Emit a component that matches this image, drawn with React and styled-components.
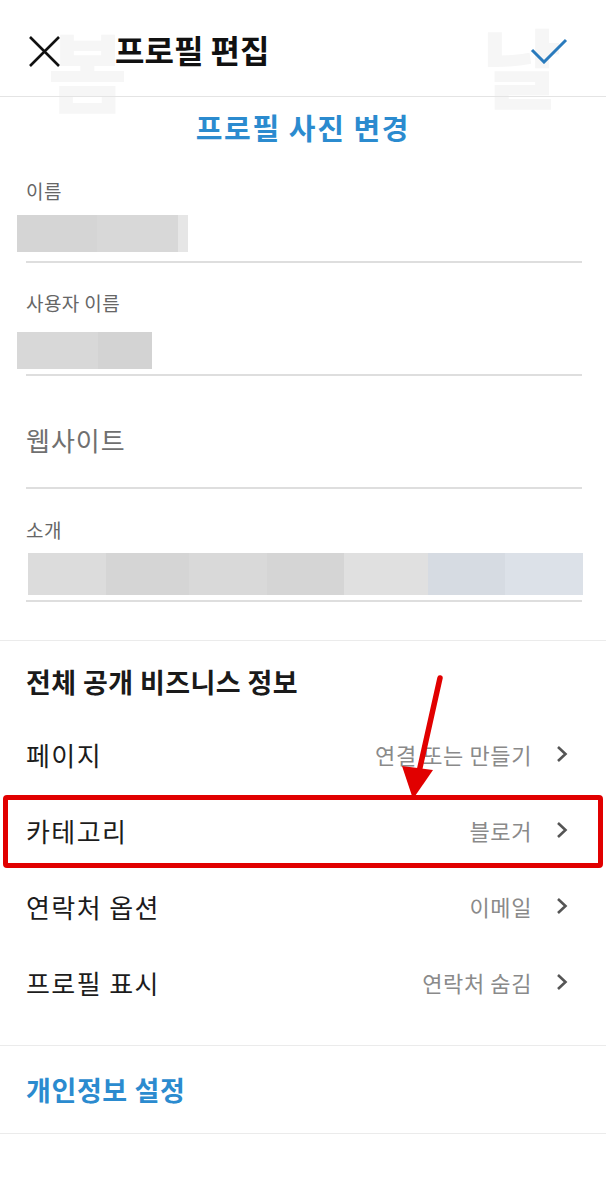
import React from "react";
import styled, { createGlobalStyle } from "styled-components";

const GlobalStyle = createGlobalStyle`
  html, body {
    margin: 0;
    padding: 0;
    background: #ffffff;
  }
  body {
    font-family: "Noto Sans CJK KR", "Noto Sans", sans-serif;
    color: #111111;
  }
`;

const Screen = styled.div`
  position: relative;
  width: 606px;
  height: 1178px;
  overflow: hidden;
  background: #ffffff;
`;

const Watermark = styled.span`
  position: absolute;
  top: ${(p) => p.top}px;
  left: ${(p) => p.left}px;
  font-size: 86px;
  font-weight: 900;
  line-height: 1;
  color: #f6f6f6;
  pointer-events: none;
`;

const Header = styled.header`
  position: relative;
  display: flex;
  align-items: center;
  height: 97px;
  padding: 6px 38px 0 28px;
  border-bottom: 1px solid #e4e4e4;
  box-sizing: border-box;
`;

const Title = styled.h1`
  margin: -4px 0 0 54px;
  font-size: 32px;
  font-weight: 700;
  color: #111111;
`;

const Spacer = styled.div`
  flex: 1;
`;

const ChangePhoto = styled.div`
  position: relative;
  height: 60px;
  display: flex;
  align-items: center;
  justify-content: center;
  font-size: 29px;
  font-weight: 700;
  letter-spacing: 1.6px;
  color: #2b8bcf;
`;

const Form = styled.div`
  position: relative;
  padding: 0 24px 38px 26px;
  border-bottom: 1px solid #ebebeb;
`;

const Field = styled.div`
  display: flex;
  flex-direction: column;
  padding-top: ${(p) => p.top}px;
  border-bottom: 2px solid #dedede;
`;

const Label = styled.div`
  font-size: 19px;
  line-height: 24px;
  letter-spacing: 0.4px;
  color: #666666;
`;

const Placeholder = styled.div`
  font-size: 26px;
  line-height: 32px;
  letter-spacing: 1px;
  color: #707070;
  padding-bottom: 31px;
`;

const Blur = styled.div`
  margin: ${(p) => p.mt}px 0 ${(p) => p.mb}px ${(p) => p.ml}px;
  width: ${(p) => p.w}px;
  height: ${(p) => p.h}px;
  background: ${(p) => p.bg};
`;

const Section = styled.section`
  position: relative;
  padding: ${(p) => p.pt}px 0 ${(p) => p.pb}px;
  border-bottom: 1px solid #ebebeb;
`;

const SectionTitle = styled.h2`
  margin: 0;
  padding: 0 26px;
  font-size: 27px;
  line-height: 36px;
  letter-spacing: ${(p) => (p.link ? 0.6 : 0.4)}px;
  font-weight: 700;
  color: ${(p) => (p.link ? "#2b8bcf" : "#1a1a1a")};
`;

const RowList = styled.div`
  margin-top: 16px;
`;

const Row = styled.div`
  position: relative;
  display: flex;
  align-items: center;
  height: 76px;
  padding: 0 38px 0 26px;

  &::after {
    content: "";
    display: ${(p) => (p.marked ? "block" : "none")};
    position: absolute;
    top: 3px;
    left: 3px;
    right: 3px;
    bottom: 0;
    border: 5px solid #e10000;
    border-radius: 4px;
  }
`;

const RowLabel = styled.span`
  font-size: 26px;
  letter-spacing: 1.4px;
  color: #1c1c1c;
`;

const RowValue = styled.span`
  margin-left: auto;
  font-size: 22px;
  letter-spacing: 0.6px;
  color: #8a8a8a;
`;

const Chevron = styled.svg`
  margin-left: 24px;
  flex-shrink: 0;
`;

const Arrow = styled.svg`
  position: absolute;
  left: 394px;
  top: 672px;
  pointer-events: none;
`;

const CloseIcon = () => (
  <svg width="33" height="33" viewBox="0 0 33 33">
    <path d="M2 2 L31 31 M31 2 L2 31" stroke="#111" strokeWidth="2.6" fill="none" />
  </svg>
);

const CheckIcon = () => (
  <svg width="38" height="26" viewBox="0 0 38 26">
    <path d="M2 12 L14 24 L36 2" stroke="#2a7bbd" strokeWidth="3" fill="none" />
  </svg>
);

const ChevronIcon = () => (
  <Chevron width="12" height="18" viewBox="0 0 12 18">
    <path d="M2 2 L9.5 9 L2 16" stroke="#555" strokeWidth="2.6" fill="none" />
  </Chevron>
);

const rows = [
  { label: "페이지", value: "연결 또는 만들기" },
  { label: "카테고리", value: "블로거", marked: true },
  { label: "연락처 옵션", value: "이메일" },
  { label: "프로필 표시", value: "연락처 숨김" },
];

const bioBg =
  "linear-gradient(90deg, #dcdcdc 0 14%, #d5d5d5 14% 29%, #d9d9d9 29% 43%, #d5d5d5 43% 57%, #e0e0e0 57% 72%, #d6dbe2 72% 86%, #dce1e8 86% 100%)";

const App = () => {
  return (
    <>
      <GlobalStyle />
      <Screen>
        <Watermark top={26} left={48}>봄</Watermark>
        <Watermark top={22} left={482}>날</Watermark>

        <Header>
          <CloseIcon />
          <Title>프로필 편집</Title>
          <Spacer />
          <CheckIcon />
        </Header>

        <ChangePhoto>프로필 사진 변경</ChangePhoto>

        <Form>
          <Field top={22}>
            <Label>이름</Label>
            <Blur
              mt={12}
              mb={9}
              ml={-9}
              w={171}
              h={37}
              bg="linear-gradient(90deg, #d5d5d5 0 47%, #d8d8d8 47% 94%, #e6e6e6 94% 100%)"
            />
          </Field>
          <Field top={28}>
            <Label>사용자 이름</Label>
            <Blur
              mt={17}
              mb={5}
              ml={-9}
              w={135}
              h={37}
              bg="linear-gradient(90deg, #d8d8d8 0 60%, #d3d3d3 60% 100%)"
            />
          </Field>
          <Field top={48}>
            <Placeholder>웹사이트</Placeholder>
          </Field>
          <Field top={29}>
            <Label>소개</Label>
            <Blur mt={11} mb={5} ml={2} w={555} h={42} bg={bioBg} />
          </Field>
        </Form>

        <Section pt={23} pb={25}>
          <SectionTitle>전체 공개 비즈니스 정보</SectionTitle>
          <RowList>
            {rows.map((r) => (
              <Row key={r.label} marked={r.marked}>
                <RowLabel>{r.label}</RowLabel>
                <RowValue>{r.value}</RowValue>
                <ChevronIcon />
              </Row>
            ))}
          </RowList>
        </Section>

        <Section pt={26} pb={25}>
          <SectionTitle link>개인정보 설정</SectionTitle>
        </Section>

        <Arrow width="60" height="130" viewBox="0 0 60 130">
          <path d="M46 6 L25 100" stroke="#e10000" strokeWidth="5.5" strokeLinecap="round" fill="none" />
          <path d="M8 94 L19 127 L39 98 Z" fill="#e10000" />
        </Arrow>
      </Screen>
    </>
  );
};

export default App;
